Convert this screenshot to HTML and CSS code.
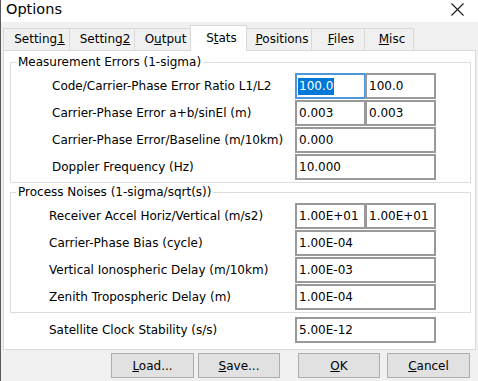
FILE: index.html
```html
<!DOCTYPE html>
<html lang="en">

<head>
    <meta charset="UTF-8" />
    <title>Options</title>
    <link rel="stylesheet" href="styles.css">
</head>

<body>
    <div class="window">
        <div class="titlebar">
            <span class="title">Options</span>
            <svg class="close" width="13" height="13" viewBox="0 0 13 13">
                <path d="M0.5 0.5 L12.5 12.5 M12.5 0.5 L0.5 12.5" stroke="#1a1a1a" stroke-width="1.1" fill="none" />
            </svg>
        </div>

        <div class="tabs">
            <div class="tab tab-setting1">Setting<u>1</u></div>
            <div class="tab tab-setting2">Setting<u>2</u></div>
            <div class="tab tab-output">O<u>u</u>tput</div>
            <div class="tab tab-stats active">S<u>t</u>ats</div>
            <div class="tab tab-positions"><u>P</u>ositions</div>
            <div class="tab tab-files"><u>F</u>iles</div>
            <div class="tab tab-misc"><u>M</u>isc</div>
        </div>

        <div class="page">
            <fieldset class="group group-meas">
                <legend>Measurement Errors (1-sigma)</legend>
                <div class="rows">
                    <div class="row">
                        <span class="label">Code/Carrier-Phase Error Ratio L1/L2</span>
                        <span class="fields">
                            <span class="edit half focus"><span class="sel">100.0</span></span>
                            <span class="edit half second">100.0</span>
                        </span>
                    </div>
                    <div class="row">
                        <span class="label">Carrier-Phase Error a+b/sinEl (m)</span>
                        <span class="fields">
                            <span class="edit half">0.003</span>
                            <span class="edit half second">0.003</span>
                        </span>
                    </div>
                    <div class="row">
                        <span class="label">Carrier-Phase Error/Baseline (m/10km)</span>
                        <span class="fields"><span class="edit wide">0.000</span></span>
                    </div>
                    <div class="row">
                        <span class="label">Doppler Frequency (Hz)</span>
                        <span class="fields"><span class="edit wide">10.000</span></span>
                    </div>
                </div>
            </fieldset>

            <fieldset class="group group-noise">
                <legend>Process Noises (1-sigma/sqrt(s))</legend>
                <div class="rows">
                    <div class="row">
                        <span class="label">Receiver Accel Horiz/Vertical (m/s2)</span>
                        <span class="fields">
                            <span class="edit half">1.00E+01</span>
                            <span class="edit half second">1.00E+01</span>
                        </span>
                    </div>
                    <div class="row">
                        <span class="label">Carrier-Phase Bias (cycle)</span>
                        <span class="fields"><span class="edit wide">1.00E-04</span></span>
                    </div>
                    <div class="row">
                        <span class="label">Vertical Ionospheric Delay (m/10km)</span>
                        <span class="fields"><span class="edit wide">1.00E-03</span></span>
                    </div>
                    <div class="row">
                        <span class="label">Zenith Tropospheric Delay (m)</span>
                        <span class="fields"><span class="edit wide">1.00E-04</span></span>
                    </div>
                </div>
            </fieldset>

            <div class="row row-clock">
                <span class="label">Satellite Clock Stability (s/s)</span>
                <span class="fields"><span class="edit wide">5.00E-12</span></span>
            </div>
        </div>

        <div class="buttons">
            <button class="btn btn-load"><u>L</u>oad...</button>
            <button class="btn btn-save"><u>S</u>ave...</button>
            <button class="btn btn-ok"><u>O</u>K</button>
            <button class="btn btn-cancel"><u>C</u>ancel</button>
        </div>
    </div>
</body>

</html>
```

FILE: styles.css
```css
/* Reset some default styles */
* {
    box-sizing: border-box;
    margin: 0;
    padding: 0;
}

body {
    font-family: 'DejaVu Sans', sans-serif;
    font-size: 12px;
    color: #000;
    background-color: #f0f0f0;
    width: 478px;
    height: 381px;
    overflow: hidden;
}

.window {
    height: 381px;
    border-left: 1px solid #5a5a5a;
}

/* Title bar */
.titlebar {
    height: 22px;
    background-color: #ffffff;
    display: flex;
    justify-content: space-between;
    align-items: flex-start;
    padding: 0 14px 0 5px;
}

.title {
    font-size: 14.5px;
    line-height: 19px;
}

.close {
    margin-top: 3px;
}

/* Tabs */
.tabs {
    height: 28px;
    display: flex;
    align-items: flex-end;
    padding-left: 2px;
}

.tab {
    height: 22px;
    line-height: 21px;
    text-align: center;
    padding-left: 6px;
    background-color: #f0f0f0;
    border: 1px solid #d9d9d9;
    border-bottom: none;
    margin-left: -1px;
}

.tab:first-child {
    margin-left: 0;
}

.tab.active {
    height: 26px;
    line-height: 24px;
    background-color: #ffffff;
    margin-bottom: -1px;
    position: relative;
    z-index: 1;
}

.tab-setting1 { width: 67px; }
.tab-setting2 { width: 66px; }
.tab-output { width: 57px; }
.tab-stats { width: 57px; }
.tab-positions { width: 66px; }
.tab-files { width: 54px; }
.tab-misc { width: 50px; }

/* Tab page */
.page {
    height: 300px;
    margin: 0 2px 0 2px;
    background-color: #ffffff;
    border: 1px solid #d9d9d9;
}

.group {
    border: 1px solid #dcdcdc;
    margin: 0 4px 0 6px;
    padding: 4px 0 2px;
    min-width: 0;
}

.group-meas {
    margin-top: 4px;
}

.group-noise {
    margin-top: 2px;
}

.group legend {
    line-height: 14px;
    padding: 0 2px;
    margin-left: 5px;
}

.rows {
    display: flex;
    flex-direction: column;
    gap: 1px;
}

.row {
    display: flex;
    align-items: center;
    height: 26px;
}

.label {
    flex: 0 0 284px;
    padding-left: 41px;
    white-space: nowrap;
}

.group-noise .label {
    padding-left: 38px;
}

.row-clock {
    margin-top: 4px;
}

.row-clock .label {
    flex-basis: 291px;
    padding-left: 45px;
}

.fields {
    display: flex;
    width: 141px;
}

.edit {
    height: 26px;
    line-height: 22px;
    border: 2px solid #999999;
    padding-left: 2px;
    white-space: nowrap;
    background-color: #ffffff;
}

.edit.wide {
    width: 141px;
}

.edit.half {
    width: 71px;
}

.edit.second {
    margin-left: -1px;
}

.edit.focus {
    border-color: #4d98dd;
    padding-left: 1px;
}

.sel {
    background-color: #0078d7;
    color: #ffffff;
    padding: 1px 1px 2px;
}

/* Dialog buttons */
.buttons {
    display: flex;
    justify-content: flex-end;
    padding: 3px 8px 0 0;
}

.btn {
    font-family: 'DejaVu Sans', sans-serif;
    font-size: 12px;
    color: #000;
    height: 25px;
    width: 82px;
    background-color: #e1e1e1;
    border: 1px solid #adadad;
}

.btn-load { width: 83px; }
.btn-save { margin-left: 4px; }
.btn-ok { margin-left: 18px; }
.btn-cancel { width: 83px; margin-left: 7px; }
```
